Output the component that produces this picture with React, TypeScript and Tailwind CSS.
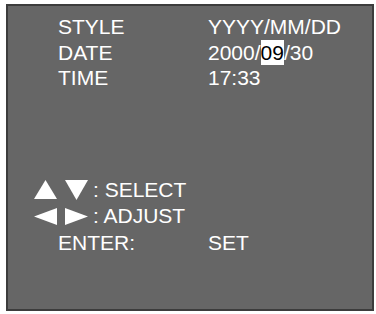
export default function App() {
  const rows = [
    { label: "STYLE", value: <>YYYY/MM/DD</> },
    {
      label: "DATE",
      value: (
        <>
          2000/<span className="inline-block bg-white text-black leading-[25px] h-[25px] align-top">09</span>/30
        </>
      ),
    },
    { label: "TIME", value: <>17:33</> },
  ];

  return (
    <div className="w-[376px] h-[314px] bg-white pt-[4px] pl-[6px]">
      <div className="w-[368px] h-[307px] bg-[#666666] border-2 border-[#3c3c3c] text-white text-[21px] font-['Liberation_Sans',Arial,sans-serif]">
        {/* settings */}
        <div className="pt-[8px] pl-[50px] leading-[25.5px]">
          {rows.map((r) => (
            <div key={r.label} className="grid grid-cols-[150px_1fr]">
              <span>{r.label}</span>
              <span>{r.value}</span>
            </div>
          ))}
        </div>

        {/* key guide */}
        <div className="mt-[86px] leading-[26.5px]">
          <div className="flex items-center pl-[26px]">
            <svg width="23" height="19" viewBox="0 0 23 19">
              <polygon points="11.5,0 23,19 0,19" fill="white" />
            </svg>
            <svg width="23" height="20" viewBox="0 0 23 20" className="ml-[8px]">
              <polygon points="0,0 23,0 11.5,20" fill="white" />
            </svg>
            <span className="ml-[5px]">: SELECT</span>
          </div>
          <div className="flex items-center pl-[26px]">
            <svg width="23" height="17" viewBox="0 0 23 17">
              <polygon points="0,8.5 23,0 23,17" fill="white" />
            </svg>
            <svg width="23" height="17" viewBox="0 0 23 17" className="ml-[8px]">
              <polygon points="0,0 23,8.5 0,17" fill="white" />
            </svg>
            <span className="ml-[5px]">: ADJUST</span>
          </div>
          <div className="grid grid-cols-[150px_1fr] pl-[50px]">
            <span>ENTER:</span>
            <span>SET</span>
          </div>
        </div>
      </div>
    </div>
  );
}
